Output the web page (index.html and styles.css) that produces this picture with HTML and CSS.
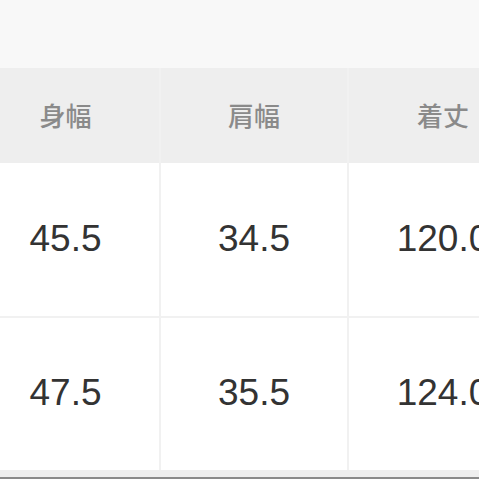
FILE: index.html
```html
<!DOCTYPE html>
<html lang="ja">
<head>
<meta charset="utf-8">
<link rel="stylesheet" href="styles.css">
</head>
<body>
<div class="top"></div>
<div class="size-table">
  <div class="th">身幅</div>
  <div class="th">肩幅</div>
  <div class="th">着丈</div>
  <div class="td">45.5</div>
  <div class="td">34.5</div>
  <div class="td">120.0</div>
  <div class="td">47.5</div>
  <div class="td">35.5</div>
  <div class="td">124.0</div>
</div>
<div class="bottom-strip"></div>
<div class="bottom-line"></div>
</body>
</html>
```
FILE: styles.css
```css
html, body {
  margin: 0;
  padding: 0;
  background: #f8f8f8;
  overflow: hidden;
}
body {
  width: 479px;
  height: 479px;
  font-family: "Noto Sans CJK JP", "Noto Sans", sans-serif;
}
.top {
  height: 68px;
  background: #f8f8f8;
}
.size-table {
  display: grid;
  grid-template-columns: 187px 186px 188px;
  grid-template-rows: 93px 153px 152px;
  column-gap: 2px;
  row-gap: 2px;
  margin-left: -28px;
  width: 565px;
  background: #f1f1f1;
}
.th {
  background: #eeeeee;
  color: #8a8a8a;
  font-size: 26px;
  font-weight: 500;
  display: flex;
  align-items: center;
  justify-content: center;
  padding-bottom: 2px;
  margin-bottom: -2px;
}
.td {
  background: #ffffff;
  color: #333333;
  font-family: "Liberation Sans", Arial, sans-serif;
  font-size: 37px;
  display: flex;
  align-items: center;
  justify-content: center;
  padding-bottom: 2px;
}
.bottom-strip {
  height: 7px;
  background: #eeeeee;
}
.bottom-line {
  height: 2px;
  background: #8a8a8a;
}
```
